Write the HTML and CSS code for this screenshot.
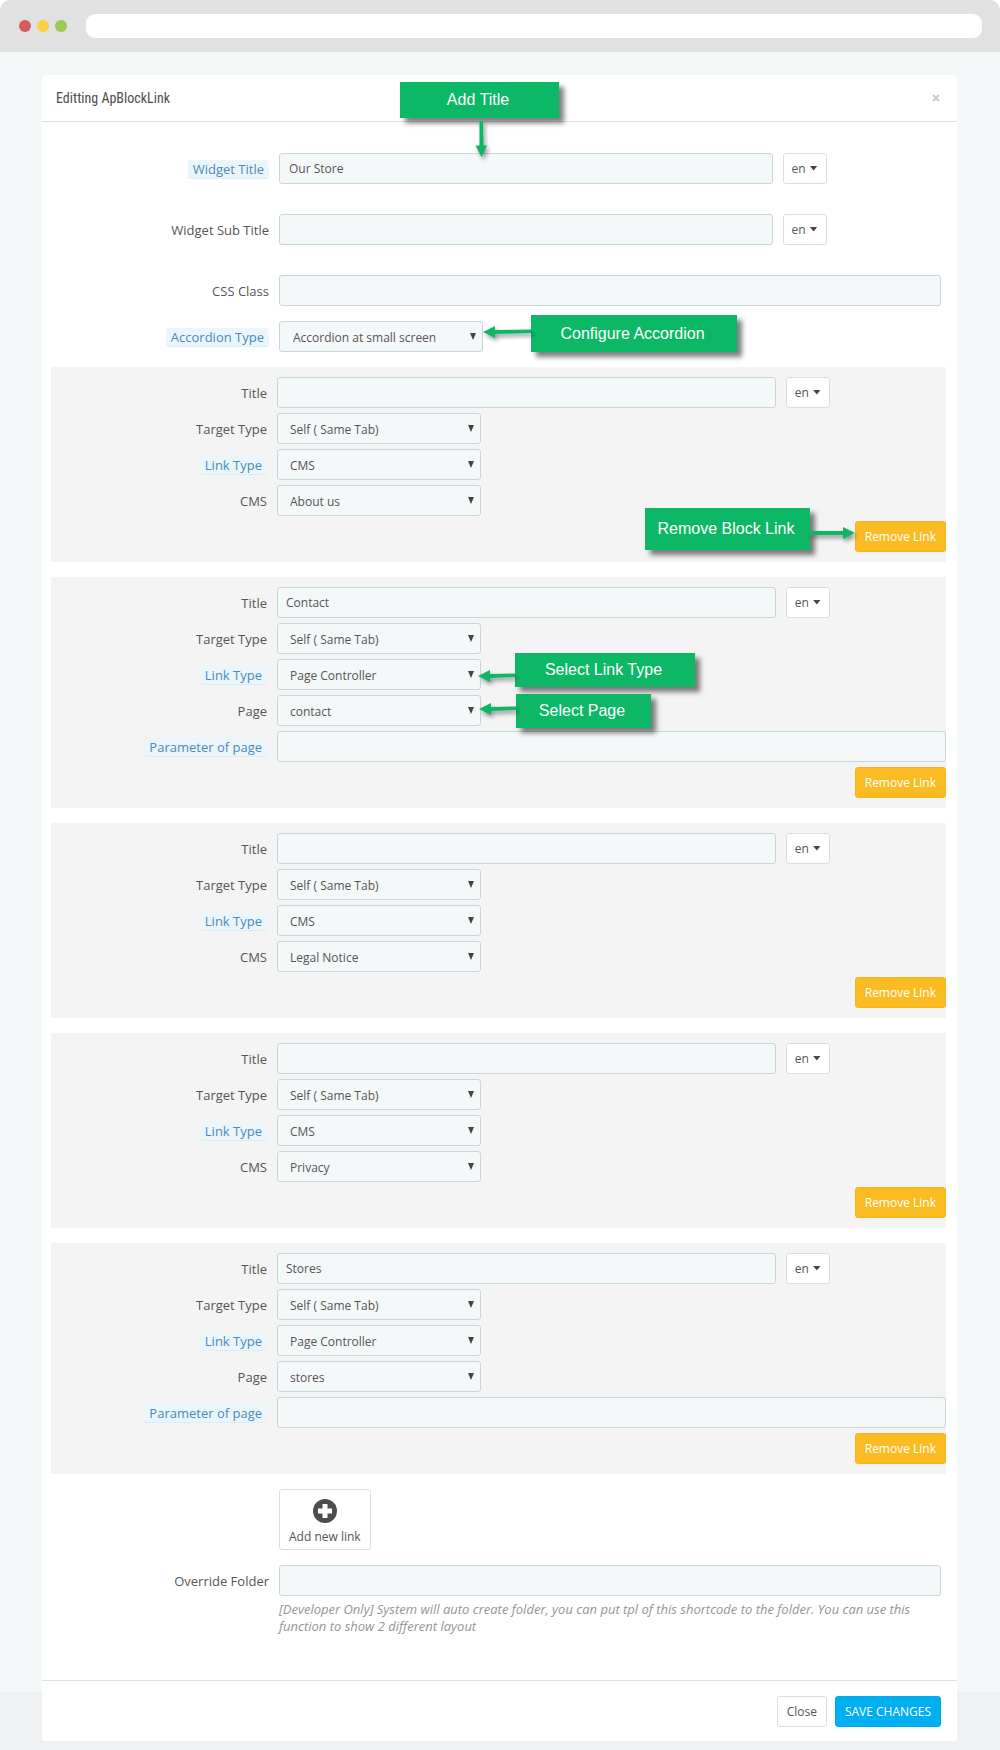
FILE: index.html
```html
<!DOCTYPE html>
<html lang="en">
<head>
<meta charset="utf-8">
<meta name="viewport" content="width=device-width, initial-scale=1">
<title>Editting ApBlockLink</title>
<link rel="stylesheet" href="styles.css">
</head>
<body>
<header class="browser-bar">
  <span class="dot dot-red"></span>
  <span class="dot dot-yellow"></span>
  <span class="dot dot-green"></span>
  <input class="address" type="text" aria-label="Address">
</header>
<main class="backdrop">
  <form class="modal">
    <div class="modal-header">
      <h1 class="modal-title">Editting ApBlockLink</h1>
      <button class="dismiss" type="button" aria-label="Dismiss">
        <svg width="8" height="8" viewBox="0 0 8 8"><path d="M1 1l6 6M7 1L1 7" stroke="#c9c9c9" stroke-width="2"/></svg>
      </button>
    </div>

    <div class="modal-body">
      <div class="row row-spaced">
        <label class="label" for="widget-title"><span class="hint">Widget Title</span></label>
        <div class="field">
          <input class="text text-lang" id="widget-title" type="text" value="Our Store">
          <button class="btn lang" type="button">en <span class="caret"></span></button>
        </div>
        <div class="callout callout-title">Add Title
          <svg class="arrow arrow-down" width="14" height="36" viewBox="0 0 14 36"><path d="M5.500 0L9 0L9.500 24.500L13 24.500L7.500 36L1.500 24.500L5.500 24.500z"/></svg>
        </div>
      </div>
      <div class="row row-spaced">
        <label class="label" for="widget-sub">Widget Sub Title</label>
        <div class="field">
          <input class="text text-lang" id="widget-sub" type="text">
          <button class="btn lang" type="button">en <span class="caret"></span></button>
        </div>
      </div>
      <div class="row">
        <label class="label" for="css-class">CSS Class</label>
        <div class="field"><input class="text" id="css-class" type="text"></div>
      </div>
      <div class="row">
        <label class="label" for="accordion"><span class="hint">Accordion Type</span></label>
        <div class="field"><span class="select"><select id="accordion"><option>Accordion at small screen</option></select></span></div>
        <div class="callout callout-accordion">Configure Accordion
          <svg class="arrow arrow-left" width="48" height="14" viewBox="0 0 48 14"><path d="M0 7L12 1L12 5L48 4.500L48 8L12 9L12 13z"/></svg>
        </div>
      </div>

      <fieldset class="block">
        <div class="row">
          <label class="label" for="t1">Title</label>
          <div class="field">
            <input class="text text-lang" id="t1" type="text">
            <button class="btn lang" type="button">en <span class="caret"></span></button>
          </div>
        </div>
        <div class="row">
          <label class="label" for="g1">Target Type</label>
          <div class="field"><span class="select"><select id="g1"><option>Self ( Same Tab)</option></select></span></div>
        </div>
        <div class="row">
          <label class="label" for="l1"><span class="hint">Link Type</span></label>
          <div class="field"><span class="select"><select id="l1"><option>CMS</option></select></span></div>
        </div>
        <div class="row">
          <label class="label" for="c1">CMS</label>
          <div class="field"><span class="select"><select id="c1"><option>About us</option></select></span></div>
        </div>
        <div class="actions">
          <button class="btn btn-warning" type="button">Remove Link</button>
          <div class="callout callout-remove">Remove Block Link
            <svg class="arrow arrow-right" width="45" height="14" viewBox="0 0 45 14"><path d="M0 5L33 5L33 1L45 7L33 13L33 9L0 9z"/></svg>
          </div>
        </div>
      </fieldset>

      <fieldset class="block">
        <div class="row">
          <label class="label" for="t2">Title</label>
          <div class="field">
            <input class="text text-lang" id="t2" type="text" value="Contact">
            <button class="btn lang" type="button">en <span class="caret"></span></button>
          </div>
        </div>
        <div class="row">
          <label class="label" for="g2">Target Type</label>
          <div class="field"><span class="select"><select id="g2"><option>Self ( Same Tab)</option></select></span></div>
        </div>
        <div class="row">
          <label class="label" for="l2"><span class="hint">Link Type</span></label>
          <div class="field"><span class="select"><select id="l2"><option>Page Controller</option></select></span></div>
          <div class="callout callout-type">Select Link Type
            <svg class="arrow arrow-left" width="37" height="14" viewBox="0 0 37 14"><path d="M0 7L12 1L12 5L37 4.500L37 8L12 9L12 13z"/></svg>
          </div>
        </div>
        <div class="row">
          <label class="label" for="c2">Page</label>
          <div class="field"><span class="select"><select id="c2"><option>contact</option></select></span></div>
          <div class="callout callout-page">Select Page
            <svg class="arrow arrow-left" width="37" height="14" viewBox="0 0 37 14"><path d="M0 7L12 1L12 5L37 4.500L37 8L12 9L12 13z"/></svg>
          </div>
        </div>
        <div class="row">
          <label class="label" for="p2"><span class="hint">Parameter of page</span></label>
          <div class="field"><input class="text" id="p2" type="text"></div>
        </div>
        <div class="actions"><button class="btn btn-warning" type="button">Remove Link</button></div>
      </fieldset>

      <fieldset class="block">
        <div class="row">
          <label class="label" for="t3">Title</label>
          <div class="field">
            <input class="text text-lang" id="t3" type="text">
            <button class="btn lang" type="button">en <span class="caret"></span></button>
          </div>
        </div>
        <div class="row">
          <label class="label" for="g3">Target Type</label>
          <div class="field"><span class="select"><select id="g3"><option>Self ( Same Tab)</option></select></span></div>
        </div>
        <div class="row">
          <label class="label" for="l3"><span class="hint">Link Type</span></label>
          <div class="field"><span class="select"><select id="l3"><option>CMS</option></select></span></div>
        </div>
        <div class="row">
          <label class="label" for="c3">CMS</label>
          <div class="field"><span class="select"><select id="c3"><option>Legal Notice</option></select></span></div>
        </div>
        <div class="actions"><button class="btn btn-warning" type="button">Remove Link</button></div>
      </fieldset>

      <fieldset class="block">
        <div class="row">
          <label class="label" for="t4">Title</label>
          <div class="field">
            <input class="text text-lang" id="t4" type="text">
            <button class="btn lang" type="button">en <span class="caret"></span></button>
          </div>
        </div>
        <div class="row">
          <label class="label" for="g4">Target Type</label>
          <div class="field"><span class="select"><select id="g4"><option>Self ( Same Tab)</option></select></span></div>
        </div>
        <div class="row">
          <label class="label" for="l4"><span class="hint">Link Type</span></label>
          <div class="field"><span class="select"><select id="l4"><option>CMS</option></select></span></div>
        </div>
        <div class="row">
          <label class="label" for="c4">CMS</label>
          <div class="field"><span class="select"><select id="c4"><option>Privacy</option></select></span></div>
        </div>
        <div class="actions"><button class="btn btn-warning" type="button">Remove Link</button></div>
      </fieldset>

      <fieldset class="block">
        <div class="row">
          <label class="label" for="t5">Title</label>
          <div class="field">
            <input class="text text-lang" id="t5" type="text" value="Stores">
            <button class="btn lang" type="button">en <span class="caret"></span></button>
          </div>
        </div>
        <div class="row">
          <label class="label" for="g5">Target Type</label>
          <div class="field"><span class="select"><select id="g5"><option>Self ( Same Tab)</option></select></span></div>
        </div>
        <div class="row">
          <label class="label" for="l5"><span class="hint">Link Type</span></label>
          <div class="field"><span class="select"><select id="l5"><option>Page Controller</option></select></span></div>
        </div>
        <div class="row">
          <label class="label" for="c5">Page</label>
          <div class="field"><span class="select"><select id="c5"><option>stores</option></select></span></div>
        </div>
        <div class="row">
          <label class="label" for="p5"><span class="hint">Parameter of page</span></label>
          <div class="field"><input class="text" id="p5" type="text"></div>
        </div>
        <div class="actions"><button class="btn btn-warning" type="button">Remove Link</button></div>
      </fieldset>

      <div class="row">
        <span></span>
        <div class="field">
          <button class="btn add-link" type="button">
            <svg width="26" height="26" viewBox="0 0 26 26"><circle cx="13" cy="13" r="12" fill="#4d4d4d"/><path d="M13 6v14M6 13h14" stroke="#fff" stroke-width="5"/></svg>
            Add new link
          </button>
        </div>
      </div>
      <div class="row">
        <label class="label" for="override">Override Folder</label>
        <div class="field-stack">
          <input class="text" id="override" type="text">
          <p class="help">[Developer Only] System will auto create folder, you can put tpl of this shortcode to the folder. You can use this function to show 2 different layout</p>
        </div>
      </div>
    </div>

    <div class="modal-footer">
      <button class="btn" type="button">Close</button>
      <button class="btn btn-primary" type="submit">SAVE CHANGES</button>
    </div>
  </form>
</main>
</body>
</html>
```
FILE: styles.css
```css
* {
  box-sizing: border-box;
}

body {
  margin: 0;
  background: #fff;
  color: #555;
  font: 12px/17px "Open Sans", "Noto Sans", sans-serif;
}

button, input, select {
  font: inherit;
  color: inherit;
}

/* Browser frame */
.browser-bar {
  display: flex;
  align-items: center;
  gap: 6px;
  height: 52px;
  padding: 0 18px 0 19px;
  background: #e1e1e1;
  border-radius: 10px 10px 0 0;
}

.dot {
  width: 12px;
  height: 12px;
  border-radius: 50%;
}

.dot-red { background: #d95c5c; }
.dot-yellow { background: #fbd043; }
.dot-green { background: #9bc953; }

.address {
  flex: 1;
  min-width: 0;
  height: 24px;
  margin-left: 13px;
  padding: 0 10px;
  border: 0;
  border-radius: 9px;
  background: #fff;
}

.backdrop {
  padding: 23px 43px 9px 42px;
  background: linear-gradient(to top, #f0f1f3 58px, #f4f8f9 58px);
}

/* Modal */
.modal {
  background: #fff;
  border-radius: 3px;
}

.modal-header {
  display: flex;
  align-items: center;
  justify-content: space-between;
  height: 47px;
  padding: 0 17px 0 14px;
  border-bottom: 1px solid #e0e0e0;
}

.modal-title {
  margin: 0;
  font: 14px/20px "Ubuntu Condensed", "Liberation Sans Narrow", "Roboto Condensed", sans-serif;
  color: #4d4d4d;
}

.dismiss {
  display: flex;
  padding: 0;
  border: 0;
  background: none;
}

.modal-body {
  display: flex;
  flex-direction: column;
  gap: 15px;
  padding: 31px 11px 45px 9px;
}

.modal-footer {
  display: flex;
  justify-content: flex-end;
  gap: 8px;
  padding: 15px 16px 14px;
  border-top: 1px solid #e0e0e0;
}

/* Form rows */
.row {
  display: grid;
  grid-template-columns: 218px minmax(0, 1fr);
  column-gap: 10px;
  padding-right: 5px;
  position: relative;
}

.row-spaced {
  margin-bottom: 15px;
}

.label {
  display: flex;
  align-items: center;
  justify-content: flex-end;
  height: 31px;
  padding-top: 1px;
  font-size: 13px;
  line-height: 18px;
}

.hint {
  padding: 0 5px;
  border-bottom: 1px solid #d9eef6;
  border-radius: 3px;
  background: #ebf6fb;
  color: #4a8abb;
}

.field {
  display: flex;
  gap: 10px;
}

.text, .select select {
  width: 100%;
  height: 31px;
  padding: 0 9px;
  border: 1px solid #c7d6db;
  border-radius: 3px;
  background: #f5f8f9;
}

.text-lang {
  width: calc(75% - 3px);
}

.select {
  position: relative;
  width: 204px;
}

.select select {
  display: block;
  padding: 1px 24px 0 13px;
  appearance: none;
}

.select::after {
  content: "";
  position: absolute;
  top: 12px;
  right: 7px;
  width: 6px;
  height: 7px;
  background: #444;
  clip-path: polygon(0 0, 100% 0, 50% 100%);
  pointer-events: none;
}

.help {
  margin: 5px 0 0;
  color: #959595;
  font-size: 13px;
  font-style: italic;
}

/* Link blocks */
.block {
  display: flex;
  flex-direction: column;
  gap: 5px;
  min-width: 0;
  margin: 0;
  padding: 10px 0;
  border: 0;
  background: #f4f4f4;
}

.block .row {
  grid-template-columns: 216px minmax(0, 1fr);
  padding-right: 0;
}

.block .text {
  padding: 0 8px;
}

.block .select select {
  padding-left: 12px;
}

.actions {
  display: flex;
  justify-content: flex-end;
  position: relative;
}

/* Buttons */
.btn {
  height: 31px;
  padding: 0 9px;
  border: 1px solid #dedede;
  border-radius: 3px;
  background: #fff;
  white-space: nowrap;
}

.btn-warning {
  border-color: #f9b21a;
  background: #fbbb22;
  color: #fff;
}

.btn-primary {
  border-color: #00a9ea;
  background: #00aff0;
  color: #fff;
}

.lang {
  display: flex;
  align-items: center;
  justify-content: center;
  gap: 4px;
  width: 44px;
  padding: 0;
}

.caret {
  width: 8px;
  height: 5px;
  margin-bottom: 1px;
  background: #444;
  clip-path: polygon(0 0, 100% 0, 50% 100%);
}

.add-link {
  display: flex;
  flex-direction: column;
  align-items: center;
  gap: 4px;
  height: 61px;
  padding-top: 8px;
}

/* Annotations */
.callout {
  display: flex;
  align-items: center;
  justify-content: center;
  position: absolute;
  z-index: 1;
  padding-right: 3px;
  background: #0cb866;
  box-shadow: 5px 5px 5px rgba(0, 0, 0, .5);
  color: #fff;
  font: 16px/20px "Liberation Sans", Arial, sans-serif;
  white-space: nowrap;
}

.callout-title { left: 349px; top: -71px; width: 159px; height: 36px; }
.callout-accordion { left: 480px; top: -6px; width: 206px; height: 37px; }
.callout-remove { right: 136px; top: -13px; width: 165px; height: 42px; }
.callout-type { left: 464px; top: -6px; width: 180px; height: 34px; }
.callout-page { left: 465px; top: -1px; width: 135px; height: 34px; }

.arrow {
  position: absolute;
  overflow: visible;
  fill: #0cb866;
  filter: drop-shadow(2px 3px 2px rgba(0, 0, 0, .4));
}

.arrow-down { left: 74px; top: 39px; }
.arrow-left { right: 100%; top: 10px; }
.arrow-right { left: 100%; top: 18px; }
.callout-type .arrow { top: 16px; }
.callout-page .arrow { top: 8px; }
```
